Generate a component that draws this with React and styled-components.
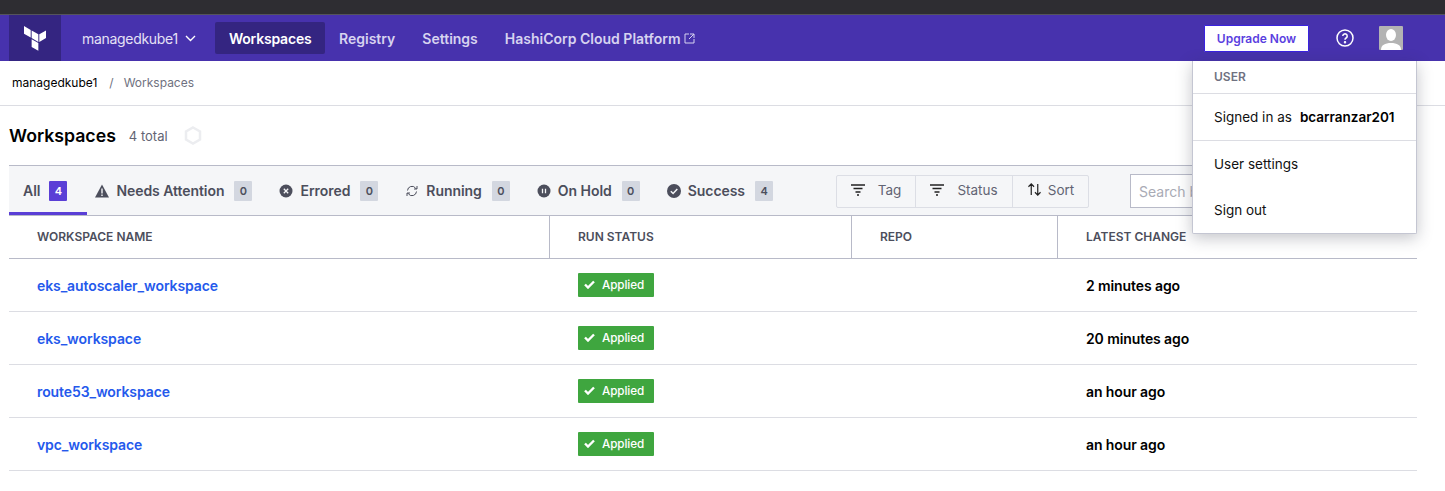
import React from "react";
import styled, { createGlobalStyle } from "styled-components";

const GlobalStyle = createGlobalStyle`
  html, body { margin: 0; padding: 0; background: #fff; }
  body { font-family: Inter, "Liberation Sans", sans-serif; overflow: hidden; }
`;

const Page = styled.div`
  width: 1445px;
  height: 491px;
  position: relative;
  overflow: hidden;
`;
const TopStrip = styled.div`
  height: 14px;
  background: #2e2d32;
  border-bottom: 1px solid #55545c;
`;
const Nav = styled.nav`
  height: 46px;
  background: #4732ad;
  display: flex;
  align-items: center;
  padding-left: 9px;
`;
const LogoBox = styled.div`
  width: 52px;
  height: 46px;
  background: #342581;
  display: flex;
  align-items: center;
  justify-content: center;
  margin-right: 21px;
`;
const OrgSwitch = styled.div`
  color: #e4e1f5;
  font-size: 14px;
  display: flex;
  align-items: center;
  gap: 7px;
  margin-right: 19px;
  letter-spacing: -0.3px;
`;
const NavLink = styled.a`
  color: ${(p) => (p.$active ? "#fff" : "#d7d3f0")};
  background: ${(p) => (p.$active ? "#342581" : "transparent")};
  font-size: 14px;
  font-weight: 600;
  letter-spacing: ${(p) => (p.$active ? "-0.2px" : "0")};
  height: 32px;
  padding: ${(p) => (p.$active ? "0 14px" : "0 13.5px")};
  border-radius: 2px;
  display: flex;
  align-items: center;
  gap: 3px;
`;
const NavRight = styled.div`
  margin-left: auto;
  display: flex;
  align-items: center;
  padding-right: 42px;
`;
const UpgradeButton = styled.button`
  width: 105px;
  height: 27px;
  background: #fff;
  border: 1px solid #3a22e0;
  color: #5a3fe0;
  font: 600 12px Inter, sans-serif;
  border-radius: 1px;
  padding: 0;
  margin-right: 27px;
`;
const HelpIcon = styled.svg`
  width: 18px;
  height: 18px;
  margin-right: 25px;
`;
const Avatar = styled.div`
  width: 24px;
  height: 24px;
  background: #b3b3b3;
  border-radius: 1px;
  overflow: hidden;
`;
const Breadcrumb = styled.div`
  height: 45px;
  box-sizing: border-box;
  display: flex;
  align-items: center;
  padding: 0 0 2px 12px;
  font-size: 12px;
  border-bottom: 1px solid #dcdde3;
`;
const Crumb = styled.span`
  color: ${(p) => (p.$current ? "#6f7180" : "#000")};
`;
const Slash = styled(Crumb)`
  color: #6f7180;
  margin: 0 10px 0 12px;
`;
const Main = styled.div`
  padding: 0 28px 0 9px;
`;
const TitleRow = styled.div`
  height: 59px;
  display: flex;
  align-items: center;
`;
const Title = styled.h1`
  margin: 0 13px 0 0;
  font-size: 17.7px;
  font-weight: 600;
  color: #000;
`;
const Total = styled.span`
  font-size: 13px;
  color: #626473;
  margin-right: 16px;
`;
const FilterBar = styled.div`
  height: 49px;
  background: #f5f6f8;
  border-top: 1px solid #b8bac8;
  border-bottom: 1px solid #b8bac8;
  display: flex;
  position: relative;
`;
const Tab = styled.div`
  height: 49px;
  box-sizing: border-box;
  display: flex;
  align-items: center;
  font-size: 14px;
  font-weight: 600;
  color: #4c4e5c;
  padding: 3px ${(p) => (p.$active ? 20 : 19)}px 0 ${(p) => (p.$active ? 14 : 8)}px;
  flex: none;
  border-bottom: 3px solid ${(p) => (p.$active ? "#5a3fd6" : "transparent")};
  gap: 7px;
  letter-spacing: -0.05px;
`;
const TabIcon = styled.svg`
  width: 14px;
  height: 14px;
  flex: none;
`;
const Count = styled.span`
  background: ${(p) => (p.$active ? "#5a3fd6" : "#d3d7e0")};
  color: ${(p) => (p.$active ? "#fff" : "#4c4e5c")};
  font-size: 11px;
  font-weight: 600;
  width: 18px;
  height: 20px;
  border-radius: 1px;
  display: flex;
  align-items: center;
  justify-content: center;
  margin-left: ${(p) => (p.$active ? 2 : 3)}px;
`;
const SortGroup = styled.div`
  position: absolute;
  left: 827px;
  top: 9px;
  height: 31px;
  display: flex;
  border: 1px solid #dcdee5;
  border-radius: 2px;
`;
const SortButton = styled.div`
  width: ${(p) => p.$w}px;
  display: flex;
  align-items: center;
  justify-content: center;
  gap: ${(p) => p.$gap || 13}px;
  font-size: 13.5px;
  color: #626473;
  padding-bottom: 4px;
  & + & { border-left: 1px solid #dcdee5; }
`;
const SearchBox = styled.input`
  position: absolute;
  left: 1121px;
  top: 8px;
  width: 100px;
  height: 34px;
  box-sizing: border-box;
  border: 1px solid #b8bac8;
  background: #fff;
  padding: 0 8px;
  font: 14px Inter, sans-serif;
  &::placeholder { color: #a9abb5; }
`;
const Table = styled.table`
  width: 1408px;
  border-collapse: separate;
  border-spacing: 0;
  table-layout: fixed;
`;
const Th = styled.th`
  box-sizing: border-box;
  height: 43px;
  padding: 0 0 1px 28px;
  width: ${(p) => p.$w}px;
  text-align: left;
  font-size: 12px;
  font-weight: 600;
  color: #4c4e5c;
  border-bottom: 1px solid #b8bac8;
  & + & { border-left: 1px solid #b8bac8; }
`;
const Td = styled.td`
  box-sizing: border-box;
  height: 53px;
  padding: 1px 0 0 ${(p) => p.$pl}px;
  border-bottom: 1px solid #dcdde3;
  font-size: 14px;
  letter-spacing: -0.1px;
`;
const WsLink = styled.a`
  color: #2459ec;
  font-weight: 600;
`;
const Applied = styled.span`
  display: inline-flex;
  align-items: center;
  gap: 7px;
  height: 24px;
  width: 76px;
  box-sizing: border-box;
  padding-left: 6px;
  background: #3fa63f;
  color: #fff;
  font-size: 11.7px;
  font-weight: 500;
  border-radius: 1px;
  position: relative;
  top: -1px;
`;
const When = styled.span`
  font-weight: 600;
  color: #000;
`;
const Menu = styled.div`
  position: absolute;
  left: 1192px;
  top: 61px;
  width: 223px;
  background: #fff;
  border: 1px solid #c4c6d2;
  border-top: none;
  border-radius: 0 0 2px 2px;
  box-shadow: 0 4px 16px rgba(40, 42, 60, 0.28);
  font-size: 13.5px;
  color: #111;
`;
const MenuHead = styled.div`
  height: 32px;
  box-sizing: content-box;
  padding-left: 21px;
  display: flex;
  align-items: center;
  font-size: 12px;
  font-weight: 600;
  color: #6f7180;
  border-bottom: 1px solid #dcdde3;
`;
const MenuHeadText = styled.span`
  margin-bottom: 2px;
`;
const MenuInfo = styled.div`
  height: 46px;
  padding-left: 21px;
  display: flex;
  align-items: center;
  gap: 8px;
  border-bottom: 1px solid #dcdde3;
`;
const MenuItem = styled.div`
  height: 46px;
  padding-left: 21px;
  display: flex;
  align-items: center;
`;
const UserName = styled.b`
  font-weight: 600;
  color: #000;
`;

const FilterIcon = () => (
  <svg width="14" height="12" viewBox="0 0 14 12" fill="none" stroke="#222" strokeWidth="1.4">
    <path d="M0 1h14M2.500 4.500h9M4.500 8h5M6 11h2" />
  </svg>
);
const rows = [
  ["eks_autoscaler_workspace", "2 minutes ago"],
  ["eks_workspace", "20 minutes ago"],
  ["route53_workspace", "an hour ago"],
  ["vpc_workspace", "an hour ago"],
];

export default function App() {
  return (
    <Page>
      <GlobalStyle />
      <TopStrip />
      <Nav>
        <LogoBox>
          <svg width="22" height="25" viewBox="0 0 23 26" fill="#fff">
            <path d="M0 0l7 4v8L0 8zM8 4.600l7 4v8l-7-4zM16 8.600l7-4v8l-7 4zM8 13.800l7 4v8l-7-4z" />
          </svg>
        </LogoBox>
        <OrgSwitch>
          managedkube1
          <svg width="11" height="7" viewBox="0 0 11 7" fill="none" stroke="#fff" strokeWidth="1.4"><path d="M1 1l4.500 4.500L10 1" /></svg>
        </OrgSwitch>
        <NavLink $active>Workspaces</NavLink>
        <NavLink>Registry</NavLink>
        <NavLink>Settings</NavLink>
        <NavLink>
          HashiCorp Cloud Platform
          <svg width="11" height="11" viewBox="0 0 11 11" fill="none" stroke="#d7d3f0"><path d="M5 1H1v9h9V6M6 1h4v4M10 1L5 6" /></svg>
        </NavLink>
        <NavRight>
          <UpgradeButton>Upgrade Now</UpgradeButton>
          <HelpIcon viewBox="0 0 18 18" fill="none" stroke="#fff" strokeWidth="1.5">
            <circle cx="9" cy="9" r="8" />
            <path d="M6.800 7a2.200 2.200 0 1 1 3.300 2c-.8.5-1.100.9-1.100 1.800" />
            <circle cx="9" cy="13.200" r=".5" fill="#fff" />
          </HelpIcon>
          <Avatar>
            <svg width="24" height="24" viewBox="0 0 24 24" fill="#fff"><ellipse cx="12" cy="9" rx="5" ry="6" /><path d="M2 24c0-5 4-7 10-7s10 2 10 7z" /></svg>
          </Avatar>
        </NavRight>
      </Nav>
      <Breadcrumb>
        <Crumb>managedkube1</Crumb>
        <Slash>/</Slash>
        <Crumb $current>Workspaces</Crumb>
      </Breadcrumb>
      <Main>
        <TitleRow>
          <Title>Workspaces</Title>
          <Total>4 total</Total>
          <svg width="18" height="19" viewBox="0 0 18 19" fill="none" stroke="#ecedf0" strokeWidth="2.500"><path d="M9 1.500l7 4v8l-7 4-7-4v-8z" /></svg>
        </TitleRow>
        <FilterBar>
          <Tab $active>All<Count $active>4</Count></Tab>
          <Tab>
            <TabIcon viewBox="0 0 14 14" fill="#4c4e5c"><path d="M7 .5l7 13H0z" /><path d="M6.300 4.500h1.400v5H6.300zM6.300 10.500h1.400v1.400H6.300z" fill="#f5f6f8" /></TabIcon>
            Needs Attention<Count>0</Count>
          </Tab>
          <Tab>
            <TabIcon viewBox="0 0 14 14"><circle cx="7" cy="7" r="6.500" fill="#4c4e5c" /><path d="M4.800 4.800l4.400 4.400M9.200 4.800l-4.400 4.400" stroke="#f5f6f8" strokeWidth="1.300" /></TabIcon>
            Errored<Count>0</Count>
          </Tab>
          <Tab>
            <TabIcon viewBox="0 0 14 14" fill="none" stroke="#4c4e5c"><path d="M2.500 6.500a4.500 4.500 0 0 1 8-2.500l1 1M11.500 7.500a4.500 4.500 0 0 1-8 2.500l-1-1M12 2v3H9M2 12V9h3" /></TabIcon>
            Running<Count>0</Count>
          </Tab>
          <Tab>
            <TabIcon viewBox="0 0 14 14"><circle cx="7" cy="7" r="6.500" fill="#4c4e5c" /><path d="M5.500 4.700v4.600M8.500 4.700v4.600" stroke="#f5f6f8" strokeWidth="1.300" /></TabIcon>
            On Hold<Count>0</Count>
          </Tab>
          <Tab>
            <TabIcon viewBox="0 0 14 14"><circle cx="7" cy="7" r="7" fill="#4c4e5c" /><path d="M3.800 7.200l2.300 2.300 4.200-4.600" fill="none" stroke="#f5f6f8" strokeWidth="1.500" /></TabIcon>
            Success<Count>4</Count>
          </Tab>
          <SortGroup>
            <SortButton $w={78}><FilterIcon />Tag</SortButton>
            <SortButton $w={96}><FilterIcon />Status</SortButton>
            <SortButton $w={75} $gap={6}>
              <svg width="15" height="13" viewBox="0 0 15 14" fill="none" stroke="#222" strokeWidth="1.300"><path d="M4 13V1M1 4l3-3 3 3M11 1v12M8 10l3 3 3-3" /></svg>
              Sort
            </SortButton>
          </SortGroup>
          <SearchBox placeholder="Search by name" />
        </FilterBar>
        <Table>
          <thead>
            <tr>
              <Th $w={540}>WORKSPACE NAME</Th>
              <Th $w={302}>RUN STATUS</Th>
              <Th $w={206}>REPO</Th>
              <Th>LATEST CHANGE</Th>
            </tr>
          </thead>
          <tbody>
            {rows.map(([name, when]) => (
              <tr key={name}>
                <Td $pl={28}><WsLink>{name}</WsLink></Td>
                <Td $pl={29}>
                  <Applied>
                    <svg width="11" height="9" viewBox="0 0 11 9" fill="none" stroke="#fff" strokeWidth="2.400"><path d="M1 4.500l3 3 6-6" /></svg>
                    Applied
                  </Applied>
                </Td>
                <Td />
                <Td $pl={29}><When>{when}</When></Td>
              </tr>
            ))}
          </tbody>
        </Table>
      </Main>
      <Menu>
        <MenuHead><MenuHeadText>USER</MenuHeadText></MenuHead>
        <MenuInfo>Signed in as <UserName>bcarranzar201</UserName></MenuInfo>
        <MenuItem>User settings</MenuItem>
        <MenuItem>Sign out</MenuItem>
      </Menu>
    </Page>
  );
}
